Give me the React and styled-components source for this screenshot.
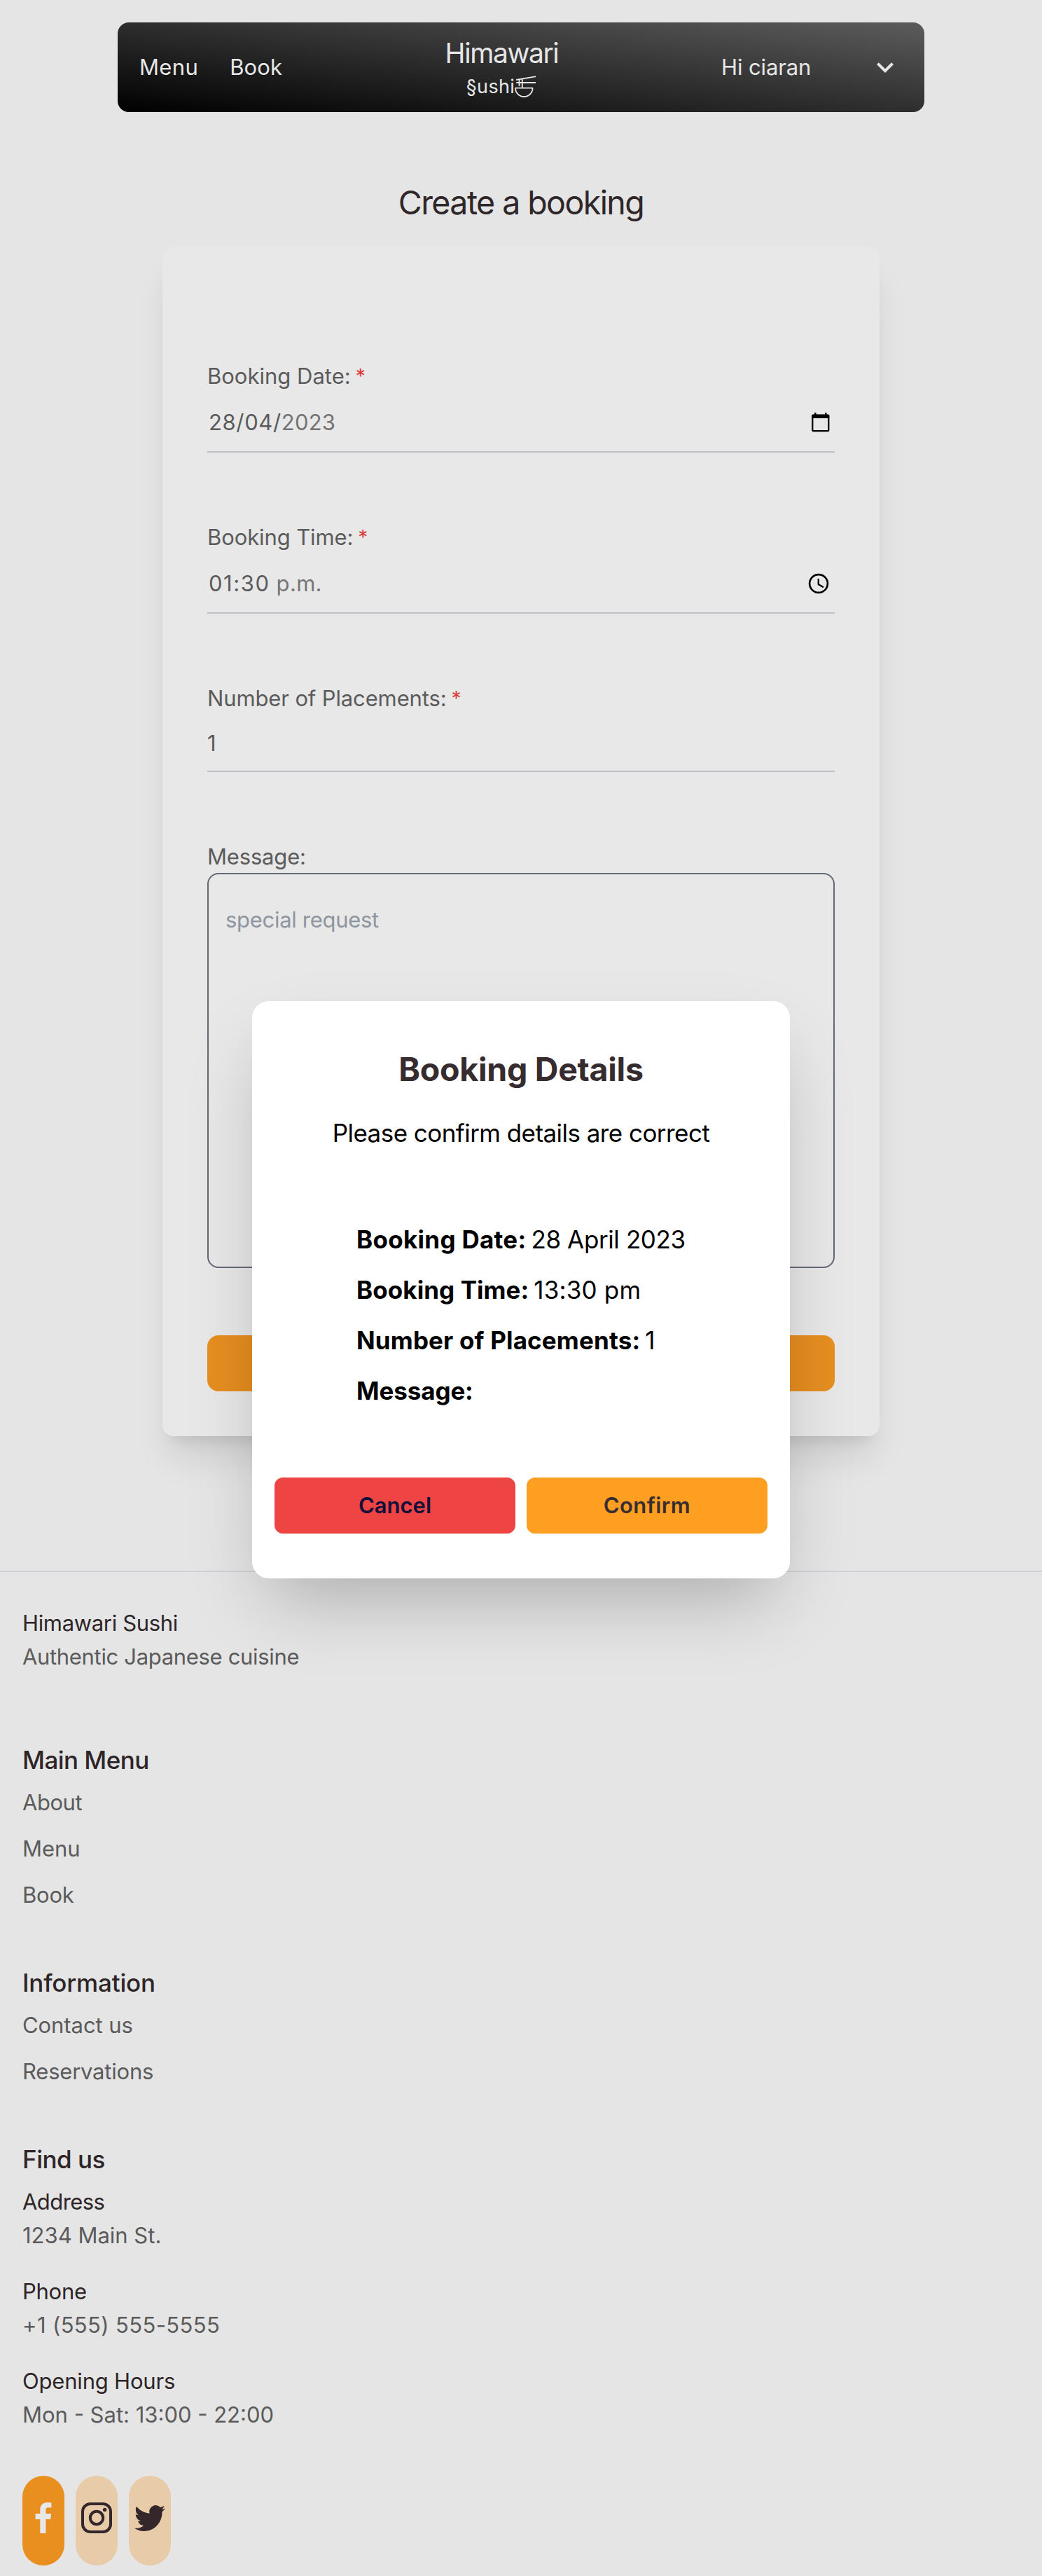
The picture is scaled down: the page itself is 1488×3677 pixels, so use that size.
import React from "react";
import styled, { createGlobalStyle } from "styled-components";

const GlobalStyle = createGlobalStyle`
  *, *::before, *::after { box-sizing: border-box; }
  body { margin: 0; background: #e5e5e5; }
  h1, h2, h3, p, ul, dl, dd { margin: 0; padding: 0; font-weight: inherit; }
  button { border: 0; padding: 0; font: inherit; }
`;

const Page = styled.div`
  position: relative;
  width: 1488px;
  min-height: 3677px;
  padding-top: 32px;
  background: #e5e5e5;
  font-family: "Inter", "Liberation Sans", sans-serif;
  font-size: 31px;
  line-height: 48px;
  color: #5b5b5b;
`;

/* Inline text run; $track is the letter spacing in px */
const Text = styled.span`
  letter-spacing: ${(p) => p.$track || 0}px;
  white-space: nowrap;
`;

/* ---------- header ---------- */
const Header = styled.header`
  display: grid;
  grid-template-columns: 402px 230px 1fr;
  align-items: center;
  width: 1152px;
  height: 128px;
  margin: 0 auto;
  padding: 0 32px 0 31px;
  border-radius: 16px;
  background: linear-gradient(to top right, #000 0%, #5c5c5c 100%);
  color: #e6e6e6;
`;

const NavLinks = styled.nav`
  display: flex;
  gap: 45px;
`;

const Brand = styled.div`
  display: flex;
  flex-direction: column;
  align-items: center;
  padding-left: 1px;
`;

const BrandName = styled.div`
  font-size: 39px;
  line-height: 56px;
  letter-spacing: -1.41px;
`;

const BrandSub = styled.div`
  display: flex;
  align-items: center;
  height: 40px;
  font-size: 27px;
  line-height: 40px;
`;

const UserMenu = styled.div`
  display: flex;
  align-items: center;
  justify-content: space-between;
  padding-left: 199px;
`;

/* ---------- booking form ---------- */
const PageTitle = styled.h1`
  margin: 101px 0 35px;
  font-size: 46.5px;
  line-height: 56px;
  letter-spacing: -1.57px;
  text-align: center;
  color: #2f2629;
`;

const FormCard = styled.form`
  width: 1024px;
  margin: 0 auto;
  padding: 161px 64px 64px;
  border-radius: 16px;
  background: #e8e8e8;
  box-shadow: 0 40px 50px -10px rgba(0, 0, 0, 0.1), 0 16px 20px -12px rgba(0, 0, 0, 0.1);
`;

const Field = styled.div`
  margin-bottom: 97px;
`;

const Label = styled.div`
  display: flex;
  height: 48px;
`;

const Required = styled.span`
  margin-left: 7px;
  font-size: 28px;
  color: #d83c3c;
`;

const FieldInput = styled.div`
  display: flex;
  align-items: center;
  padding: ${(p) => (p.$plain ? "16px 0 15px" : "18px 0 17px 2px")};
  border-bottom: 2px solid #bec0c4;
`;

const Selected = styled(Text)`
  color: #757575;
  margin-left: ${(p) => p.$gap || 0}px;
`;

const PickerIcon = styled.svg`
  display: block;
  margin-left: auto;
  margin-right: ${(p) => p.$right}px;
`;

const MessageLabel = styled(Label)`
  height: 47px;
`;

const MessageBox = styled.div`
  height: 564px;
  padding: 41px 24px;
  border: 2px solid #646877;
  border-radius: 16px;
  color: #8f959f;
`;

const SubmitButton = styled.button`
  display: block;
  width: 100%;
  height: 80px;
  margin-top: 96px;
  border-radius: 16px;
  background: #e68e20;
`;

/* ---------- modal ---------- */
const Overlay = styled.div`
  position: absolute;
  inset: 0;
  display: flex;
  align-items: center;
  justify-content: center;
  padding-top: 5px;
`;

const Modal = styled.section`
  width: 768px;
  padding: 65px 32px 64px;
  border-radius: 24px;
  background: #fff;
  box-shadow: 0 50px 100px -24px rgba(0, 0, 0, 0.25);
  color: #000;
  font-size: 35px;
  line-height: 56px;
`;

const ModalTitle = styled.h2`
  font-size: 46.5px;
  font-weight: 700;
  line-height: 64px;
  letter-spacing: -0.27px;
  text-align: center;
  color: #362b2e;
`;

const ModalLead = styled.p`
  margin-top: 31px;
  text-align: center;
  letter-spacing: -0.55px;
`;

const Details = styled.div`
  display: flex;
  flex-direction: column;
  gap: 16px;
  margin: 96px 0 96px 117px;
`;

const Detail = styled.div`
  display: flex;
  gap: 7px;
`;

const DetailName = styled(Text)`
  font-weight: 700;
`;

const Actions = styled.div`
  display: grid;
  grid-template-columns: 1fr 1fr;
  gap: 16px;
`;

const ActionButton = styled.button`
  height: 80px;
  border-radius: 12px;
  background: ${(p) => (p.$danger ? "#ef4444" : "#ff9f22")};
  color: ${(p) => (p.$danger ? "#11103a" : "#382d31")};
  font-size: 31px;
  font-weight: 600;
  line-height: 48px;
`;

/* ---------- footer ---------- */
const Footer = styled.footer`
  margin-top: 192px;
  padding: 49px 32px 15px;
  border-top: 2px solid #cfd0d3;
`;

const Strong = styled.p`
  color: #2d2528;
`;

const FooterHeading = styled.h3`
  margin-top: ${(p) => p.$top || 73}px;
  margin-bottom: 9px;
  font-size: 35px;
  font-weight: 500;
  line-height: 56px;
  color: #2d2528;
`;

const LinkList = styled.ul`
  display: flex;
  flex-direction: column;
  gap: 18px;
  list-style: none;
`;

const InfoGroups = styled.div`
  display: flex;
  flex-direction: column;
  gap: 32px;
`;

const Socials = styled.div`
  display: flex;
  gap: 16px;
  margin-top: 63px;
`;

const SocialPill = styled.a`
  display: flex;
  align-items: center;
  justify-content: center;
  width: 60px;
  height: 128px;
  padding-bottom: 8px;
  border-radius: 30px;
  background: ${(p) => (p.$active ? "#e88f20" : "#e8ccaa")};
  color: ${(p) => (p.$active ? "#e8e8e8" : "#33272b")};
`;

const BowlIcon = () => (
  <svg width="32" height="34" viewBox="0 0 32 34" fill="none" stroke="currentColor" strokeWidth="1.8">
    <path d="M2.2 7 30 2.2M2.2 11H30M6.5 6.4V16M10.8 5.6v13M0.6 18.7H26M1 18.7a12.3 12.3 0 0 0 24.6 0" />
  </svg>
);

const ChevronIcon = () => (
  <svg width="48" height="48" viewBox="0 0 24 24" fill="currentColor">
    <path d="M16.59 8.59 12 13.17 7.41 8.59 6 10l6 6 6-6z" />
  </svg>
);

const CalendarIcon = () => (
  <PickerIcon $right={6} width="28" height="30" viewBox="0 0 28 30" fill="none" stroke="#000">
    <rect x="2.3" y="4.5" width="23" height="22.6" rx="1.4" strokeWidth="2.2" />
    <path d="M1.4 6.4h24.8" strokeWidth="5.2" />
    <path d="M6.3 1v4M21.3 1v4" strokeWidth="2.4" />
  </PickerIcon>
);

const ClockIcon = () => (
  <PickerIcon $right={8} width="30" height="30" viewBox="0 0 30 30" fill="none" stroke="#000">
    <circle cx="15" cy="15" r="12.9" strokeWidth="2.7" />
    <path d="M14.7 8v8l7.2 4.2" strokeWidth="2.2" />
  </PickerIcon>
);

const FacebookIcon = () => (
  <svg width="24" height="44" viewBox="7.2 3 9.6 18" fill="currentColor">
    <path d="M13.397 20.997v-8.196h2.765l.411-3.209h-3.176V7.548c0-.926.258-1.56 1.587-1.56h1.684V3.127A22.336 22.336 0 0 0 14.201 3c-2.444 0-4.122 1.492-4.122 4.231v2.355H7.332v3.209h2.753v8.202h3.312z" />
  </svg>
);

const InstagramIcon = () => (
  <svg width="44" height="44" viewBox="0 0 44 44" fill="none" stroke="currentColor" strokeWidth="4">
    <rect x="2" y="2" width="40" height="40" rx="11" />
    <circle cx="22" cy="22" r="9.2" />
    <circle cx="33.6" cy="10.4" r="2.7" fill="currentColor" stroke="none" />
  </svg>
);

const TwitterIcon = () => (
  <svg width="44" height="37" viewBox="0 2.2 24 19.6" preserveAspectRatio="none" fill="currentColor">
    <path d="M23.953 4.57a10 10 0 01-2.825.775 4.958 4.958 0 002.163-2.723c-.951.555-2.005.959-3.127 1.184a4.92 4.92 0 00-8.384 4.482C7.69 8.095 4.067 6.13 1.64 3.162a4.822 4.822 0 00-.666 2.475c0 1.71.87 3.213 2.188 4.096a4.904 4.904 0 01-2.228-.616v.06a4.923 4.923 0 003.946 4.827 4.996 4.996 0 01-2.212.085 4.936 4.936 0 004.604 3.417 9.867 9.867 0 01-6.102 2.105c-.39 0-.779-.023-1.17-.067a13.995 13.995 0 007.557 2.209c9.053 0 13.998-7.496 13.998-13.985 0-.21 0-.42-.015-.63A9.935 9.935 0 0024 4.59z" />
  </svg>
);

const details = [
  { name: "Booking Date:", track: 0.29, value: "28 April 2023", valueTrack: -0.39 },
  { name: "Booking Time:", track: 0.07, value: "13:30 pm", valueTrack: 0.17 },
  { name: "Number of Placements:", track: 0.16, value: "1" },
  { name: "Message:", track: -0.12, value: "" },
];

const mainMenu = [
  { text: "About", track: -0.45 },
  { text: "Menu", track: -0.03 },
  { text: "Book", track: -0.22 },
];

const information = [
  { text: "Contact us", track: -0.07 },
  { text: "Reservations", track: -0.22 },
];

const findUs = [
  { title: "Address", titleTrack: -0.57, text: "1234 Main St.", track: 0 },
  { title: "Phone", titleTrack: -0.26, text: "+1 (555) 555-5555", track: 0.37 },
  { title: "Opening Hours", titleTrack: -0.19, text: "Mon - Sat: 13:00 - 22:00", track: 0 },
];

function Links({ items }) {
  return (
    <LinkList>
      {items.map((item) => (
        <li key={item.text}>
          <Text $track={item.track}>{item.text}</Text>
        </li>
      ))}
    </LinkList>
  );
}

export default function App() {
  return (
    <Page>
      <GlobalStyle />
      <Header>
        <NavLinks>
          <Text $track={0.37}>Menu</Text>
          <Text $track={0.11}>Book</Text>
        </NavLinks>
        <Brand>
          <BrandName>Himawari</BrandName>
          <BrandSub>
            <Text $track={0.35}>§ushi</Text>
            <BowlIcon />
          </BrandSub>
        </Brand>
        <UserMenu>
          <Text $track={-0.12}>Hi ciaran</Text>
          <ChevronIcon />
        </UserMenu>
      </Header>

      <PageTitle>Create a booking</PageTitle>

      <FormCard>
        <Field>
          <Label>
            <Text>Booking Date:</Text>
            <Required>*</Required>
          </Label>
          <FieldInput>
            <Text $track={0.63}>28/04/</Text>
            <Selected $track={0.21}>2023</Selected>
            <CalendarIcon />
          </FieldInput>
        </Field>
        <Field>
          <Label>
            <Text $track={-0.11}>Booking Time:</Text>
            <Required>*</Required>
          </Label>
          <FieldInput>
            <Text $track={1.56}>01:30</Text>
            <Selected $track={0.31} $gap={9}>p.m.</Selected>
            <ClockIcon />
          </FieldInput>
        </Field>
        <Field>
          <Label>
            <Text $track={-0.13}>Number of Placements:</Text>
            <Required>*</Required>
          </Label>
          <FieldInput $plain>
            <Text>1</Text>
          </FieldInput>
        </Field>
        <MessageLabel>
          <Text $track={-0.18}>Message:</Text>
        </MessageLabel>
        <MessageBox>
          <Text $track={-0.3}>special request</Text>
        </MessageBox>
        <SubmitButton type="button" />
      </FormCard>

      <Footer>
        <Strong>
          <Text $track={-0.34}>Himawari Sushi</Text>
        </Strong>
        <p>
          <Text $track={-0.33}>Authentic Japanese cuisine</Text>
        </p>

        <FooterHeading $top={95}>
          <Text $track={-0.53}>Main Menu</Text>
        </FooterHeading>
        <Links items={mainMenu} />

        <FooterHeading>
          <Text $track={-0.19}>Information</Text>
        </FooterHeading>
        <Links items={information} />

        <FooterHeading>
          <Text $track={-0.5}>Find us</Text>
        </FooterHeading>
        <InfoGroups>
          {findUs.map((group) => (
            <div key={group.title}>
              <Strong>
                <Text $track={group.titleTrack}>{group.title}</Text>
              </Strong>
              <p>
                <Text $track={group.track}>{group.text}</Text>
              </p>
            </div>
          ))}
        </InfoGroups>

        <Socials>
          <SocialPill $active>
            <FacebookIcon />
          </SocialPill>
          <SocialPill>
            <InstagramIcon />
          </SocialPill>
          <SocialPill>
            <TwitterIcon />
          </SocialPill>
        </Socials>
      </Footer>

      <Overlay>
        <Modal>
          <ModalTitle>Booking Details</ModalTitle>
          <ModalLead>Please confirm details are correct</ModalLead>
          <Details>
            {details.map((row) => (
              <Detail key={row.name}>
                <DetailName $track={row.track}>{row.name}</DetailName>
                <Text $track={row.valueTrack}>{row.value}</Text>
              </Detail>
            ))}
          </Details>
          <Actions>
            <ActionButton $danger>Cancel</ActionButton>
            <ActionButton>
              <Text $track={0.39}>Confirm</Text>
            </ActionButton>
          </Actions>
        </Modal>
      </Overlay>
    </Page>
  );
}
